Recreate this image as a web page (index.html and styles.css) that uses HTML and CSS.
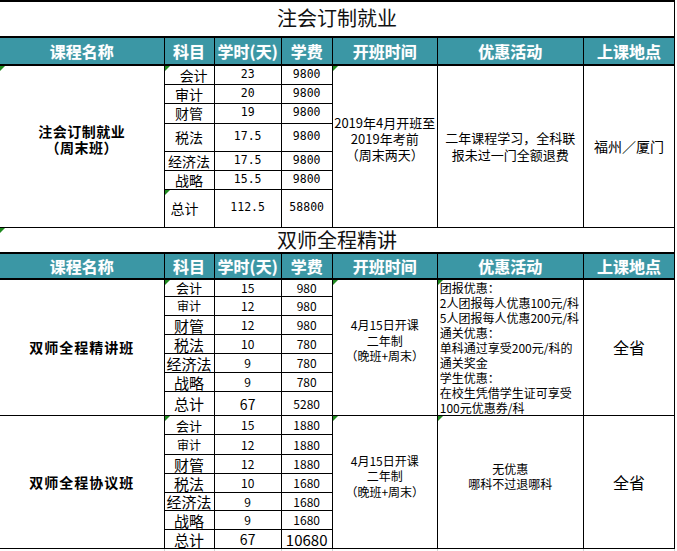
FILE: index.html
```html
<!DOCTYPE html>
<html lang="zh-CN">
<head>
<meta charset="utf-8">
<title>课程表</title>
<link rel="stylesheet" href="styles.css">
</head>
<body>
<table class="sheet">
  <colgroup>
    <col class="c-name"><col class="c-subj"><col class="c-hours"><col class="c-fee"><col class="c-start"><col class="c-promo"><col class="c-loc">
  </colgroup>
  <tbody>
    <tr class="h36"><td colspan="7" class="title title-one first">注会订制就业</td></tr>
    <tr class="h28 head">
      <th class="first">课程名称</th><th>科目</th><th>学时(天)</th><th>学费</th><th>开班时间</th><th>优惠活动</th><th class="last">上课地点</th>
    </tr>

    <tr class="h19 s1">
      <td rowspan="7" class="first mark name-one">注会订制就业<br>（周末班）</td>
      <td class="mark subj-right">会计</td><td class="num">23</td><td class="num">9800</td>
      <td rowspan="7" class="mark start-one">2019年4月开班至<br>2019年考前<br>（周末两天）</td>
      <td rowspan="7" class="promo-one">二年课程学习，全科联<br>报未过一门全额退费</td>
      <td rowspan="7" class="last loc-one">福州／厦门</td>
    </tr>
    <tr class="h19 s1"><td>审计</td><td class="num">20</td><td class="num">9800</td></tr>
    <tr class="h20 s1"><td>财管</td><td class="num">19</td><td class="num">9800</td></tr>
    <tr class="h28 s1"><td>税法</td><td class="num">17.5</td><td class="num">9800</td></tr>
    <tr class="h19 s1"><td>经济法</td><td class="num">17.5</td><td class="num">9800</td></tr>
    <tr class="h19 s1"><td>战略</td><td class="num">15.5</td><td class="num">9800</td></tr>
    <tr class="h38 s1"><td class="mark subj-left">总计</td><td class="num">112.5</td><td class="num">58800</td></tr>

    <tr class="h25"><td colspan="7" class="title title-two first mark">双师全程精讲</td></tr>
    <tr class="h26 head">
      <th class="first">课程名称</th><th>科目</th><th>学时(天)</th><th>学费</th><th>开班时间</th><th>优惠活动</th><th class="last">上课地点</th>
    </tr>

    <tr class="h18 s2">
      <td rowspan="7" class="first name-two">双师全程精讲班</td>
      <td class="mark sm">会计</td><td>15</td><td>980</td>
      <td rowspan="7" class="mark start-two">4月15日开课<br>二年制<br>（晚班+周末）</td>
      <td rowspan="7" class="mark promo-two">团报优惠：<br>2人团报每人优惠100元/科<br>5人团报每人优惠200元/科<br>通关优惠：<br>单科通过享受200元/科的<br>通关奖金<br>学生优惠：<br>在校生凭借学生证可享受<br>100元优惠券/科</td>
      <td rowspan="7" class="last loc-two">全省</td>
    </tr>
    <tr class="h19 s2"><td class="xs">审计</td><td>12</td><td>980</td></tr>
    <tr class="h19 s2"><td class="lg">财管</td><td>12</td><td>980</td></tr>
    <tr class="h19 s2"><td class="lg">税法</td><td>10</td><td>780</td></tr>
    <tr class="h19 s2"><td class="lg">经济法</td><td>9</td><td>780</td></tr>
    <tr class="h19 s2"><td class="lg">战略</td><td>9</td><td>780</td></tr>
    <tr class="h24 s2"><td class="lg">总计</td><td class="mid">67</td><td>5280</td></tr>

    <tr class="h19 s2">
      <td rowspan="7" class="first name-two">双师全程协议班</td>
      <td class="mark sm">会计</td><td>15</td><td>1880</td>
      <td rowspan="7" class="mark start-three">4月15日开课<br>二年制<br>（晚班+周末）</td>
      <td rowspan="7" class="mark promo-three">无优惠<br>哪科不过退哪科</td>
      <td rowspan="7" class="last loc-two">全省</td>
    </tr>
    <tr class="h20 s2"><td class="xs">审计</td><td>12</td><td>1880</td></tr>
    <tr class="h19 s2"><td class="lg">财管</td><td>12</td><td>1880</td></tr>
    <tr class="h19 s2"><td class="lg">税法</td><td>10</td><td>1680</td></tr>
    <tr class="h18 s2"><td class="lg">经济法</td><td>9</td><td>1680</td></tr>
    <tr class="h19 s2"><td class="lg">战略</td><td>9</td><td>1680</td></tr>
    <tr class="h19 s2"><td class="lg">总计</td><td class="mid">67</td><td class="big">10680</td></tr>

    <tr class="h4 grid">
      <td class="first"></td><td></td><td></td><td></td><td></td><td></td><td></td>
    </tr>
  </tbody>
</table>
</body>
</html>
```
FILE: styles.css
```css
html, body {
  margin: 0;
  padding: 0;
  background: #ffffff;
}

body {
  font-family: "Noto Sans CJK SC", "Noto Sans", sans-serif;
  color: #000;
}

.sheet {
  border-collapse: collapse;
  table-layout: fixed;
  width: 675px;
  border-top: 2px solid #000;
}

.c-name { width: 164px; }
.c-subj { width: 50px; }
.c-hours { width: 67px; }
.c-fee { width: 51px; }
.c-start { width: 105px; }
.c-promo { width: 146px; }
.c-loc { width: 91px; }

.sheet td,
.sheet th {
  border: 1px solid #000;
  padding: 0;
  text-align: center;
  vertical-align: middle;
  white-space: nowrap;
  overflow: hidden;
  line-height: 1;
  position: relative;
}

.sheet .first { border-left: 0; }
.sheet .last { border-right: 1px solid #000; }

.h4 { height: 4px; }
.h18 { height: 18px; }
.h19 { height: 19px; }
.h20 { height: 20px; }
.h24 { height: 24px; }
.h25 { height: 25px; }
.h26 { height: 26px; }
.h28 { height: 28px; }
.h36 { height: 36px; }
.h38 { height: 38px; }

/* titles */
.sheet .title {
  font-size: 20px;
  color: #111;
}
.sheet .title-one {
  vertical-align: top;
  padding-top: 5px;
  line-height: 22px;
}
.sheet .title-two {
  vertical-align: bottom;
  line-height: 24px;
}

/* header rows */
.head th {
  background: #3b97a5;
  color: #fff;
  font-weight: bold;
  font-size: 16px;
  border-top: 2px solid #000;
  border-bottom: 2px solid #000;
  text-shadow: 0 0 1px rgba(255,255,255,0.4);
}

/* section 1 */
.s1 td {
  font-size: 14px;
}
.s1 td.num {
  font-family: "DejaVu Sans Mono", "Noto Sans CJK SC", monospace;
  font-size: 11.5px;
}
.sheet .subj-right { text-align: right; padding-right: 6px; }
.sheet .subj-left { text-align: left; padding-left: 6px; }

.sheet .name-one {
  font-weight: bold;
  font-size: 14px;
  line-height: 16px;
  letter-spacing: 0.5px;
  padding-bottom: 14px;
}
.sheet .start-one {
  font-size: 13px;
  line-height: 16px;
  padding-bottom: 14px;
}
.sheet .promo-one {
  font-size: 13px;
  line-height: 17px;
}
.sheet .loc-one {
  font-size: 14px;
}

/* sections 2 & 3 */
.s2 td {
  font-size: 12px;
}
.s2 td.sm { font-size: 13px; }
.s2 td.xs { font-size: 12px; }
.s2 td.lg { font-size: 15px; }
.s2 td.mid { font-size: 14px; }
.s2 td.big { font-size: 15px; }

.sheet .name-two {
  font-weight: bold;
  font-size: 14px;
  letter-spacing: 1px;
}
.sheet .start-two,
.sheet .start-three {
  font-size: 12px;
  line-height: 15.5px;
  padding-bottom: 14px;
}
.sheet .start-three { padding-bottom: 12px; }
.sheet .promo-two {
  text-align: left;
  vertical-align: top;
  font-size: 12px;
  line-height: 15px;
  padding-left: 2px;
}
.sheet .promo-three {
  font-size: 12px;
  line-height: 15px;
  padding-bottom: 12px;
}
.sheet .loc-two {
  font-size: 16px;
}

/* filler gridline row */
.grid td {
  border-top: 0;
  border-bottom: 0;
  border-left: 1px solid #d4d4d4;
  border-right: 1px solid #d4d4d4;
}
.grid td.first { border-left: 0; }

/* Excel comment markers */
.sheet .mark::before {
  content: "";
  position: absolute;
  left: 0;
  top: 0;
  width: 0;
  height: 0;
  border-top: 5px solid #1f8a1f;
  border-right: 5px solid transparent;
}
```
